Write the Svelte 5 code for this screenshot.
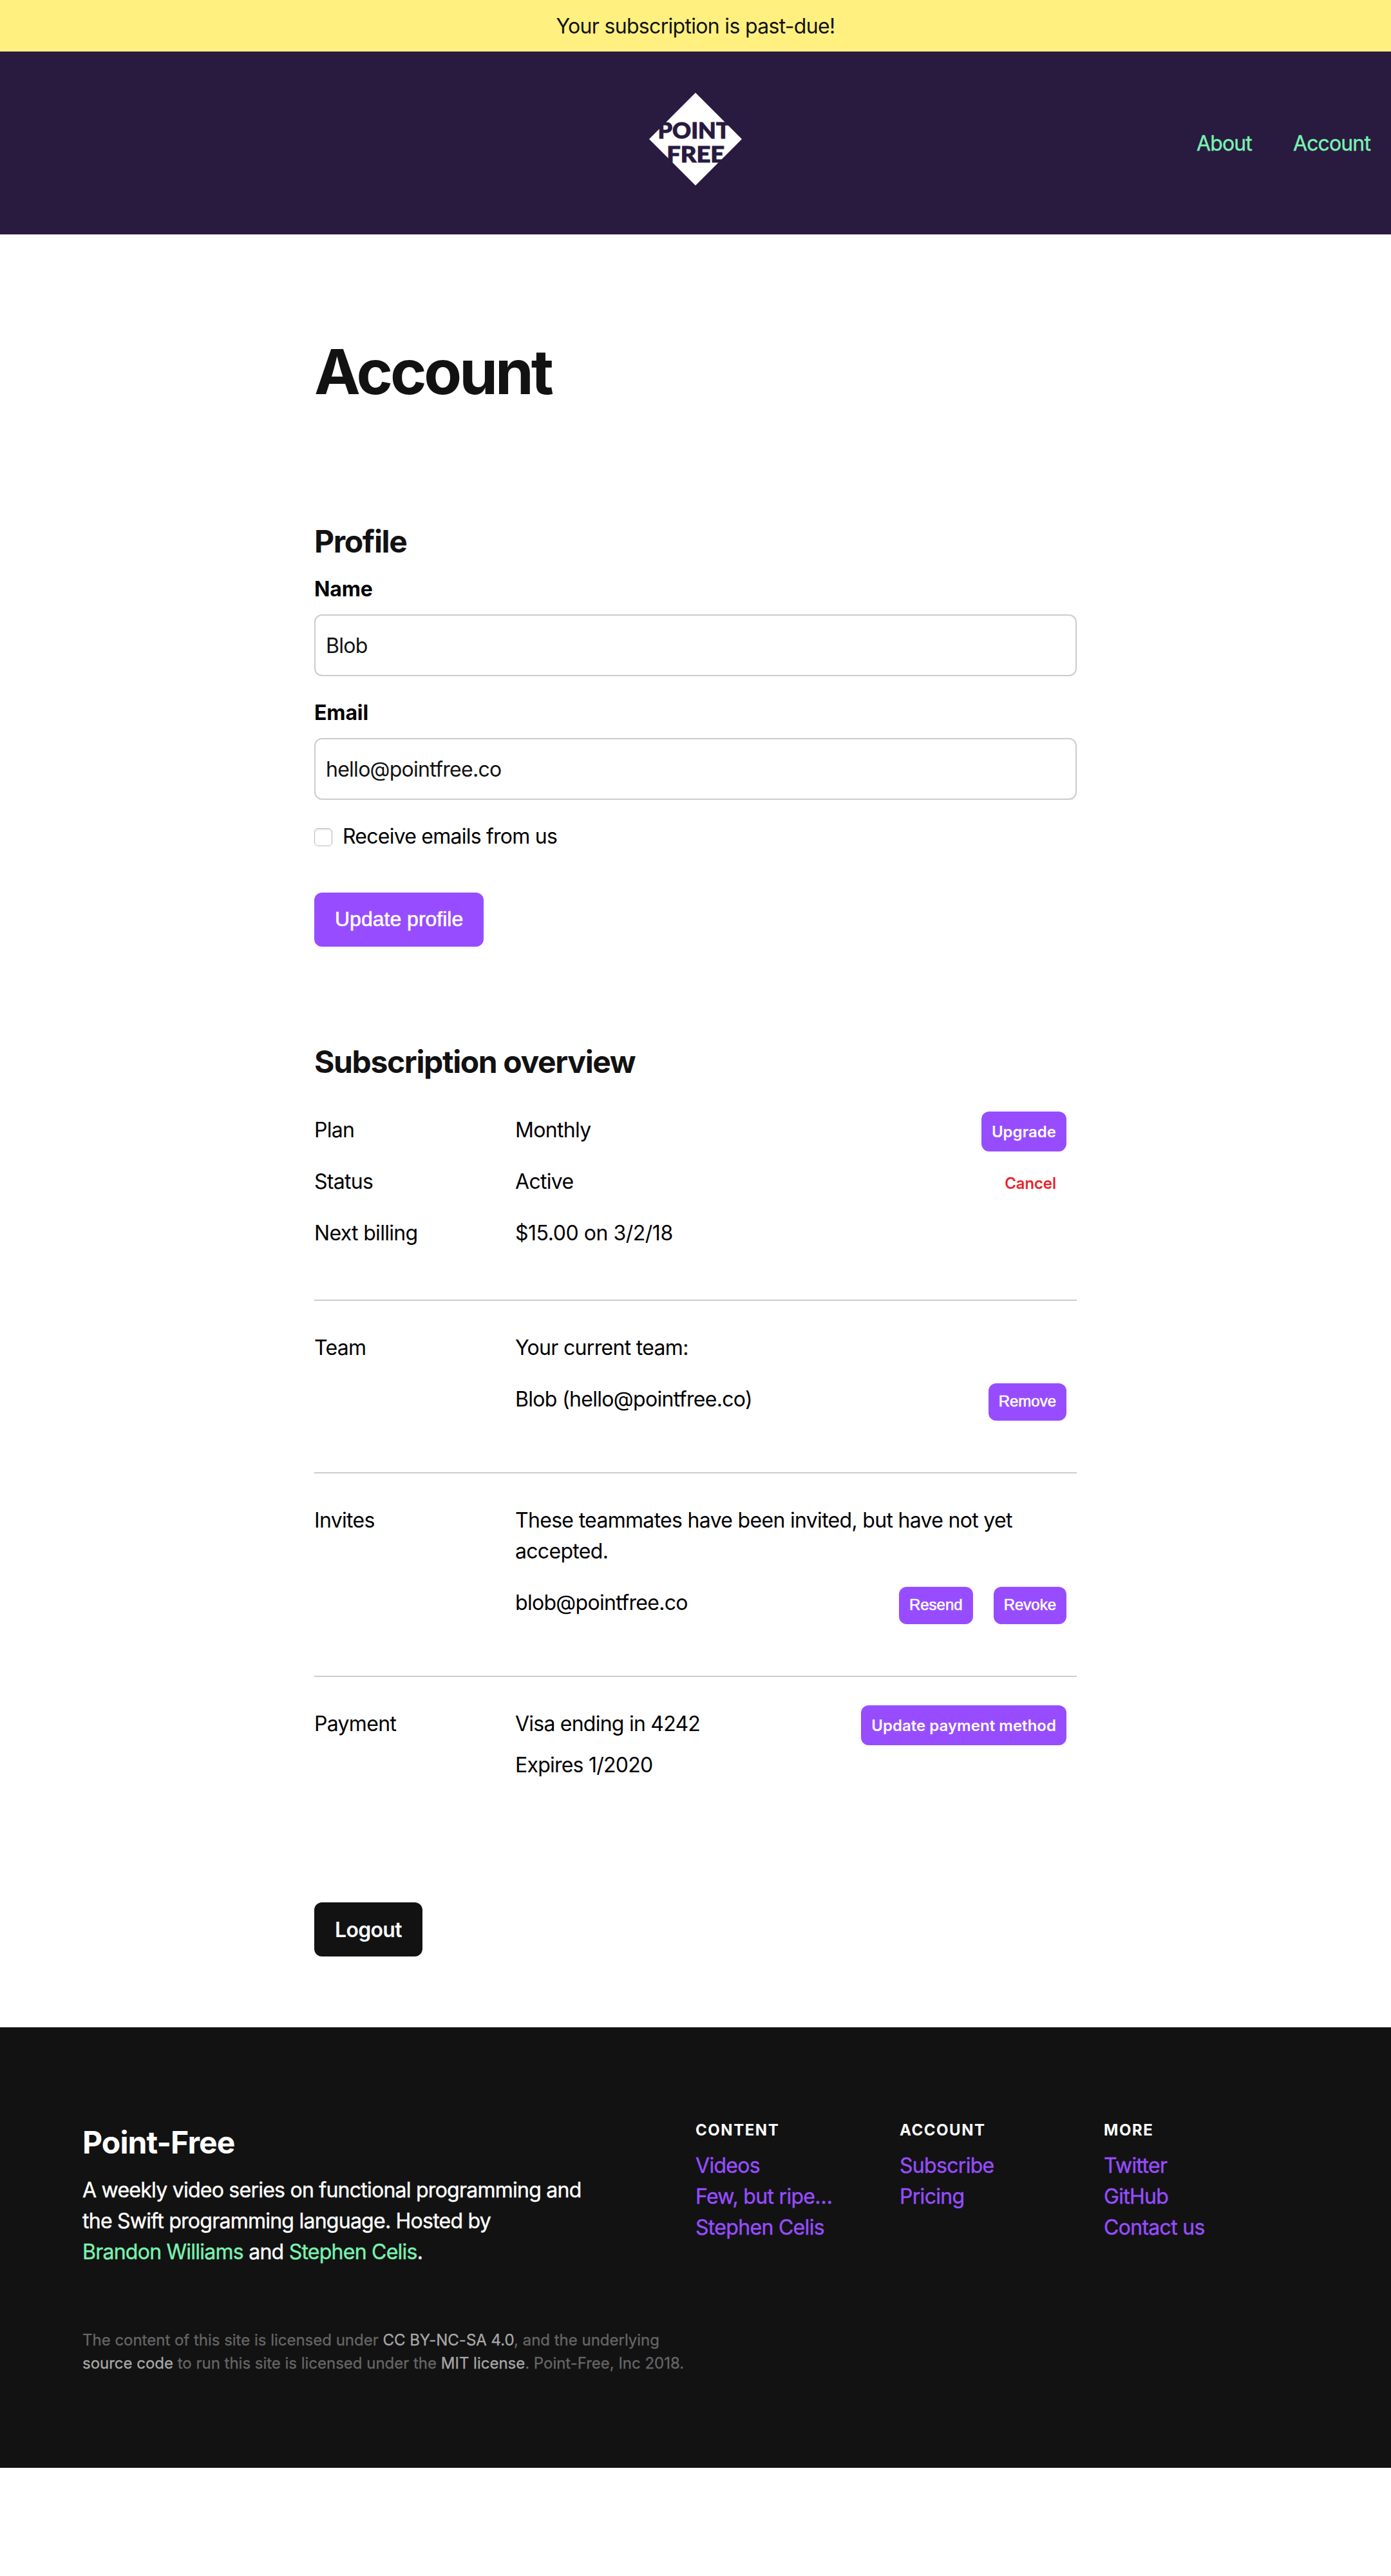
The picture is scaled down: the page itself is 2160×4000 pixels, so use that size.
<script>
  const columns = [
    { title: 'CONTENT', links: ['Videos', 'Few, but ripe…', 'Stephen Celis'] },
    { title: 'ACCOUNT', links: ['Subscribe', 'Pricing'] },
    { title: 'MORE', links: ['Twitter', 'GitHub', 'Contact us'] }
  ];
</script>

<div class="page">
  <div class="banner">Your subscription is past-due!</div>

  <header class="nav">
    <span></span>
    <svg class="logo" viewBox="0 0 144 144" width="144" height="144" role="img" aria-label="Point-Free">
      <path d="M72 0 144 72 72 144 0 72Z" fill="#fff" />
      <text x="13.6" y="70.5" textLength="112" lengthAdjust="spacingAndGlyphs">POINT</text>
      <text x="27.2" y="107.5" textLength="90" lengthAdjust="spacingAndGlyphs">FREE</text>
    </svg>
    <nav class="nav-links">
      <a href="#about">About</a>
      <a href="#account">Account</a>
    </nav>
  </header>

  <main>
    <h1>Account</h1>

    <section class="profile">
      <h2>Profile</h2>
      <label class="field">
        <span>Name</span>
        <input type="text" value="Blob" />
      </label>
      <label class="field">
        <span>Email</span>
        <input type="text" value="hello@pointfree.co" />
      </label>
      <label class="check">
        <input type="checkbox" />
        <span>Receive emails from us</span>
      </label>
      <button class="btn large">Update profile</button>
    </section>

    <section class="overview">
      <h2>Subscription overview</h2>

      <div class="group plan">
        <div class="row">
          <span>Plan</span>
          <span>Monthly</span>
          <a class="btn small raised" href="#upgrade">Upgrade</a>
        </div>
        <div class="row">
          <span>Status</span>
          <span>Active</span>
          <a class="btn small raised danger" href="#cancel">Cancel</a>
        </div>
        <div class="row">
          <span>Next billing</span>
          <span class="price">$15.00 on 3/2/18</span>
        </div>
      </div>

      <div class="group">
        <span>Team</span>
        <div class="detail">
          <p>Your current team:</p>
          <div class="member">
            <span>Blob (hello@pointfree.co)</span>
            <button class="btn tiny">Remove</button>
          </div>
        </div>
      </div>

      <div class="group">
        <span>Invites</span>
        <div class="detail">
          <p>These teammates have been invited, but have not yet accepted.</p>
          <div class="member">
            <span>blob@pointfree.co</span>
            <div class="actions">
              <button class="btn tiny">Resend</button>
              <button class="btn tiny">Revoke</button>
            </div>
          </div>
        </div>
      </div>

      <div class="group payment">
        <span>Payment</span>
        <div class="card">
          <span>Visa ending in 4242</span>
          <span>Expires 1/2020</span>
        </div>
        <a class="btn small raised" href="#payment">Update payment method</a>
      </div>
    </section>

    <a class="btn logout" href="#logout">Logout</a>
  </main>

  <footer>
    <div class="about">
      <h2>Point-Free</h2>
      <p class="blurb">
        A weekly video series on functional programming and<br />
        the Swift programming language. Hosted by<br />
        <a href="#brandon">Brandon Williams</a> and <a href="#stephen">Stephen Celis</a>.
      </p>
      <p class="legal">
        The content of this site is licensed under <a href="#cc">CC BY-NC-SA 4.0</a>, and the underlying<br />
        <a href="#source">source code</a> to run this site is licensed under the <a href="#mit">MIT license</a>. Point-Free, Inc 2018.
      </p>
    </div>
    {#each columns as column}
      <div class="column">
        <h5>{column.title}</h5>
        {#each column.links as link}
          <a href="#link">{link}</a>
        {/each}
      </div>
    {/each}
  </footer>
</div>

<style>
  :global(body) {
    margin: 0;
    background: #fff;
  }

  .page {
    font-family: Inter, 'Liberation Sans', sans-serif;
    font-size: 32px;
    line-height: 48px;
    letter-spacing: -0.0215em;
    color: #000;
  }

  h1, h2, h5, p {
    margin: 0;
  }

  a {
    text-decoration: none;
  }

  .banner {
    padding: 17px 16px 15px;
    background: #fff080;
    color: #121212;
    text-align: center;
  }

  .nav {
    display: grid;
    grid-template-columns: 1fr auto 1fr;
    align-items: center;
    box-sizing: border-box;
    height: 284px;
    padding: 0 32px;
    background: #291a40;
  }

  .logo {
    display: block;
    margin-bottom: 12px;
  }

  .logo text {
    font-family: Lato, sans-serif;
    font-size: 34.5px;
    font-weight: 900;
    letter-spacing: 0;
    fill: #291a40;
    stroke: #291a40;
    stroke-width: 1px;
  }

  .nav-links {
    display: flex;
    justify-content: flex-end;
    gap: 64px;
    padding-top: 1px;
  }

  .nav-links a {
    color: #79f2b0;
    letter-spacing: -0.027em;
    -webkit-text-stroke: 0.4px currentColor;
  }

  main {
    width: 1184px;
    margin: 0 auto;
    padding: 155px 0 110px;
  }

  h1 {
    font-size: 96px;
    line-height: 116px;
    letter-spacing: -0.042em;
    color: #121212;
  }

  h2 {
    font-size: 48px;
    line-height: 58px;
    letter-spacing: -0.0285em;
    color: #121212;
  }

  .profile {
    padding-top: 177px;
  }

  .profile h2 {
    margin-bottom: 21px;
  }

  .field {
    display: flex;
    flex-direction: column;
    gap: 15px;
    margin-bottom: 33px;
  }

  .field span {
    font-weight: 700;
    letter-spacing: -0.004em;
  }

  .field input {
    box-sizing: border-box;
    width: 100%;
    height: 96px;
    padding: 0 16px;
    border: 2px solid #ccc;
    border-radius: 12px;
    background: #fff;
    color: #121212;
    font: inherit;
    letter-spacing: -0.023em;
  }

  .check {
    display: flex;
    align-items: flex-start;
    gap: 16px;
    margin-bottom: 63px;
    letter-spacing: -0.024em;
  }

  .check input {
    appearance: none;
    box-sizing: border-box;
    width: 28px;
    height: 28px;
    margin: 11px 0 0;
    border: 1px solid #b8b8b8;
    border-radius: 6px;
    background: #fff;
    box-shadow: inset 0 2px 2px #e8e8e8;
  }

  .btn {
    display: block;
    box-sizing: border-box;
    margin: 0;
    border: 0;
    border-radius: 12px;
    background: #974dff;
    color: #fff;
    white-space: nowrap;
  }

  .btn.large {
    height: 84px;
    padding: 0 32px 2px;
    font-family: 'Liberation Sans', sans-serif;
    font-size: 32px;
    letter-spacing: 0;
    -webkit-text-stroke: 0.6px #fff;
  }

  .btn.small {
    height: 62px;
    padding: 0 16px;
    font-size: 24px;
    font-weight: 600;
    line-height: 64px;
    letter-spacing: 0.001em;
  }

  .btn.raised {
    align-self: start;
    justify-self: end;
    margin-top: -5px;
    margin-right: 16px;
  }

  .btn.danger {
    background: none;
    color: #eb1c26;
    font-weight: 500;
    -webkit-text-stroke: 0.3px currentColor;
  }

  .btn.tiny {
    height: 58px;
    margin-top: -1px;
    padding: 0 16px 2px;
    font-family: 'Liberation Sans', sans-serif;
    font-size: 24px;
    letter-spacing: 0;
    -webkit-text-stroke: 0.6px #fff;
  }

  .btn.logout {
    width: fit-content;
    margin-top: 189px;
    padding: 19px 32px 17px;
    background: #121212;
    font-weight: 600;
  }

  .overview {
    padding-top: 150px;
  }

  .overview h2 {
    margin-bottom: 53px;
  }

  .group {
    display: grid;
    grid-template-columns: 312px 1fr auto;
    padding: 49px 0 80px;
    border-bottom: 2px solid #ccc;
  }

  .group.plan {
    display: flex;
    flex-direction: column;
    gap: 32px;
    padding: 0 0 79px;
  }

  .group.payment {
    padding-bottom: 0;
    border: 0;
  }

  .row {
    display: grid;
    grid-template-columns: 312px 1fr auto;
    height: 48px;
  }

  .price {
    letter-spacing: -0.0145em;
  }

  .detail {
    display: flex;
    flex-direction: column;
    gap: 32px;
    padding-right: 16px;
  }

  .member {
    display: flex;
    justify-content: space-between;
    align-items: flex-start;
  }

  .actions {
    display: flex;
    gap: 32px;
  }

  .card {
    display: flex;
    flex-direction: column;
    gap: 16px;
    letter-spacing: -0.024em;
  }

  footer {
    display: grid;
    grid-template-columns: 952px 317px 317px 317px;
    box-sizing: border-box;
    height: 684px;
    padding: 145px 0 0 128px;
    background: #121212;
    color: #fff;
  }

  .about {
    padding-top: 5px;
  }

  .about h2 {
    margin-bottom: 21px;
    color: #fff;
    letter-spacing: -0.018em;
  }

  .blurb {
    letter-spacing: -0.0235em;
    white-space: nowrap;
    -webkit-text-stroke: 0.4px currentColor;
  }

  .blurb a {
    color: #79f2b0;
  }

  .legal {
    margin-top: 95px;
    font-size: 24px;
    line-height: 36px;
    letter-spacing: -0.0005em;
    color: #666;
    white-space: nowrap;
    -webkit-text-stroke: 0.3px currentColor;
  }

  .legal a {
    color: #a8a8a8;
  }

  .column {
    display: flex;
    flex-direction: column;
  }

  .column h5 {
    margin-bottom: 17px;
    font-size: 24px;
    line-height: 29px;
    letter-spacing: 0.064em;
  }

  .column a {
    color: #974dff;
    -webkit-text-stroke: 0.4px currentColor;
  }
</style>
